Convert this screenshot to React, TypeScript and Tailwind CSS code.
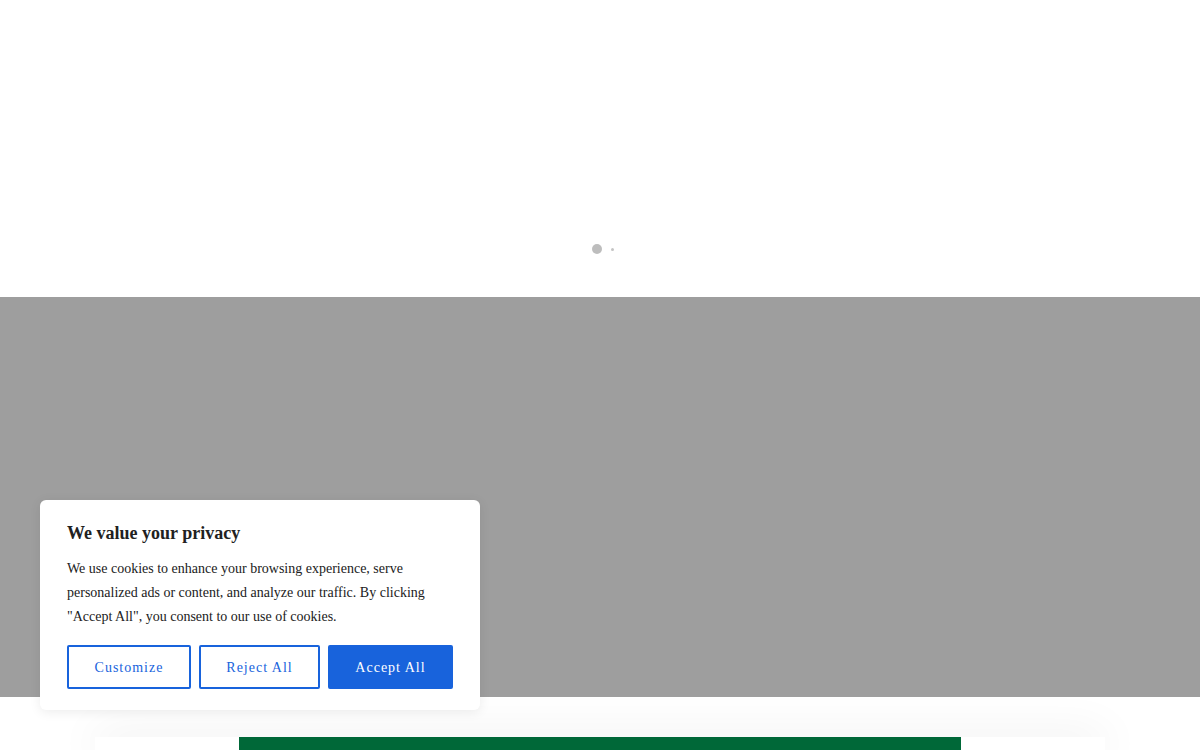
export default function App() {
  return (
    <div className="relative h-[750px] bg-white font-['Liberation_Serif',serif] overflow-hidden">
      {/* top hero, still loading */}
      <div className="h-[297px] flex items-start justify-center pt-[244px]">
        <div className="flex items-center gap-[9px] pl-[6px]">
          <span className="block w-[10px] h-[10px] rounded-full bg-[#bdbdbd]" />
          <span className="block w-[3px] h-[3px] rounded-full bg-[#c4c4c4]" />
        </div>
      </div>

      {/* banner placeholder */}
      <div className="h-[400px] bg-[#9e9e9e]" />

      {/* content card */}
      <div className="px-[95px] pt-[40px]">
        <div className="bg-white shadow-[0_0_45px_rgba(0,0,0,0.12)] h-[13px] flex justify-center">
          <div className="w-[722px] h-full bg-[#006838]" />
        </div>
      </div>

      {/* cookie consent */}
      <div className="absolute left-[40px] top-[500px] w-[440px] bg-white rounded-[6px] shadow-[0_2px_12px_rgba(0,0,0,0.08)] px-[27px] pt-[22px] pb-[21px] text-[#212121]">
        <h2 className="text-[18px] leading-[22px] font-bold">We value your privacy</h2>
        <p className="mt-[13px] text-[14px] leading-[24px]">
          We use cookies to enhance your browsing experience, serve personalized ads or content, and analyze our traffic. By clicking "Accept All", you consent to our use of cookies.
        </p>
        <div className="mt-[16px] flex gap-[8px]">
          <button className="w-[124px] h-[44px] border-2 border-[#1863dc] rounded-[2px] text-[#1863dc] text-[14px] tracking-[1px]">
            Customize
          </button>
          <button className="w-[121px] h-[44px] border-2 border-[#1863dc] rounded-[2px] text-[#1863dc] text-[14px] tracking-[1px]">
            Reject All
          </button>
          <button className="w-[125px] h-[44px] border-2 border-[#1863dc] bg-[#1863dc] rounded-[2px] text-white text-[14px] tracking-[1px]">
            Accept All
          </button>
        </div>
      </div>
    </div>
  )
}
